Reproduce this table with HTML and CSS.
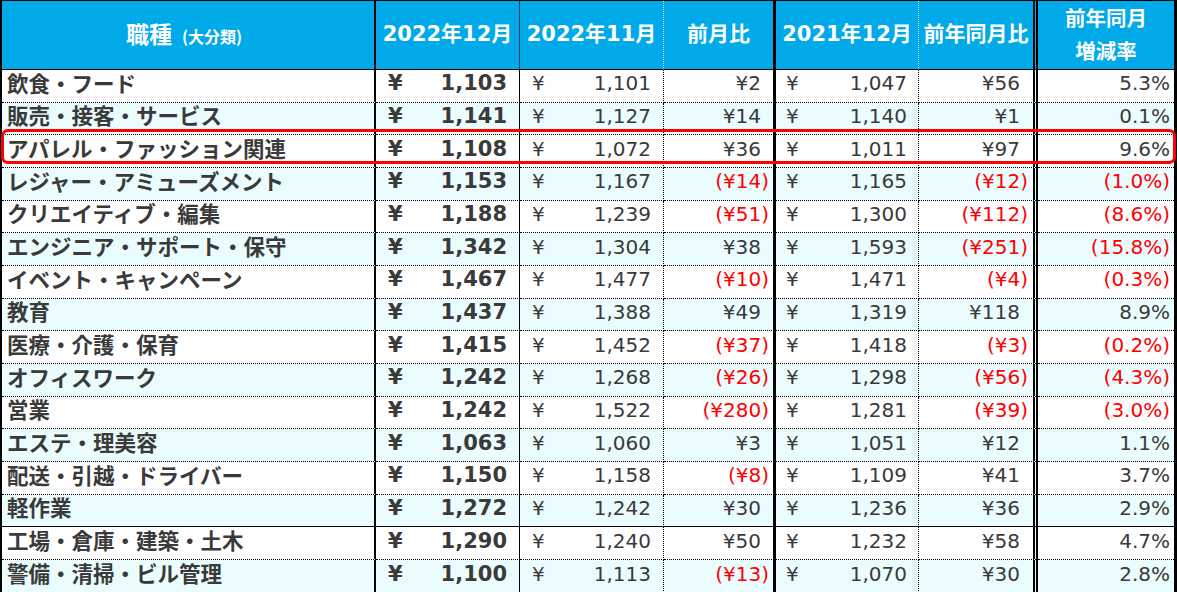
FILE: index.html
```html
<!DOCTYPE html>
<html lang="ja">
<head>
<meta charset="utf-8">
<title>職種別 平均時給</title>
<link rel="stylesheet" href="styles.css">
</head>
<body>
<div class="wrap">
<table class="sheet">
<colgroup>
<col class="w1"><col class="w2"><col class="w3"><col class="w4"><col class="w5"><col class="w6"><col class="w7">
</colgroup>
<thead>
<tr class="head">
<th class="c1"><span class="h-main">職種</span><span class="h-sub">(大分類)</span></th>
<th class="c2">2022年12月</th>
<th class="c3">2022年11月</th>
<th class="c4">前月比</th>
<th class="c5">2021年12月</th>
<th class="c6">前年同月比</th>
<th class="c7 two">前年同月<br>増減率</th>
</tr>
</thead>
<tbody>
<tr><td class="c1 name">飲食・フード</td><td class="c2 cur"><div class="acct"><span>¥</span><span>1,103</span></div></td><td class="c3 prev"><div class="acct"><span>¥</span><span>1,101</span></div></td><td class="c4 diff pos">¥2</td><td class="c5 last"><div class="acct"><span>¥</span><span>1,047</span></div></td><td class="c6 diff pos">¥56</td><td class="c7 rate">5.3%</td></tr>
<tr><td class="c1 name">販売・接客・サービス</td><td class="c2 cur"><div class="acct"><span>¥</span><span>1,141</span></div></td><td class="c3 prev"><div class="acct"><span>¥</span><span>1,127</span></div></td><td class="c4 diff pos">¥14</td><td class="c5 last"><div class="acct"><span>¥</span><span>1,140</span></div></td><td class="c6 diff pos">¥1</td><td class="c7 rate">0.1%</td></tr>
<tr><td class="c1 name">アパレル・ファッション関連</td><td class="c2 cur"><div class="acct"><span>¥</span><span>1,108</span></div></td><td class="c3 prev"><div class="acct"><span>¥</span><span>1,072</span></div></td><td class="c4 diff pos">¥36</td><td class="c5 last"><div class="acct"><span>¥</span><span>1,011</span></div></td><td class="c6 diff pos">¥97</td><td class="c7 rate">9.6%</td></tr>
<tr><td class="c1 name">レジャー・アミューズメント</td><td class="c2 cur"><div class="acct"><span>¥</span><span>1,153</span></div></td><td class="c3 prev"><div class="acct"><span>¥</span><span>1,167</span></div></td><td class="c4 diff neg">(¥14)</td><td class="c5 last"><div class="acct"><span>¥</span><span>1,165</span></div></td><td class="c6 diff neg">(¥12)</td><td class="c7 rate neg">(1.0%)</td></tr>
<tr><td class="c1 name">クリエイティブ・編集</td><td class="c2 cur"><div class="acct"><span>¥</span><span>1,188</span></div></td><td class="c3 prev"><div class="acct"><span>¥</span><span>1,239</span></div></td><td class="c4 diff neg">(¥51)</td><td class="c5 last"><div class="acct"><span>¥</span><span>1,300</span></div></td><td class="c6 diff neg">(¥112)</td><td class="c7 rate neg">(8.6%)</td></tr>
<tr><td class="c1 name">エンジニア・サポート・保守</td><td class="c2 cur"><div class="acct"><span>¥</span><span>1,342</span></div></td><td class="c3 prev"><div class="acct"><span>¥</span><span>1,304</span></div></td><td class="c4 diff pos">¥38</td><td class="c5 last"><div class="acct"><span>¥</span><span>1,593</span></div></td><td class="c6 diff neg">(¥251)</td><td class="c7 rate neg">(15.8%)</td></tr>
<tr><td class="c1 name">イベント・キャンペーン</td><td class="c2 cur"><div class="acct"><span>¥</span><span>1,467</span></div></td><td class="c3 prev"><div class="acct"><span>¥</span><span>1,477</span></div></td><td class="c4 diff neg">(¥10)</td><td class="c5 last"><div class="acct"><span>¥</span><span>1,471</span></div></td><td class="c6 diff neg">(¥4)</td><td class="c7 rate neg">(0.3%)</td></tr>
<tr><td class="c1 name">教育</td><td class="c2 cur"><div class="acct"><span>¥</span><span>1,437</span></div></td><td class="c3 prev"><div class="acct"><span>¥</span><span>1,388</span></div></td><td class="c4 diff pos">¥49</td><td class="c5 last"><div class="acct"><span>¥</span><span>1,319</span></div></td><td class="c6 diff pos">¥118</td><td class="c7 rate">8.9%</td></tr>
<tr><td class="c1 name">医療・介護・保育</td><td class="c2 cur"><div class="acct"><span>¥</span><span>1,415</span></div></td><td class="c3 prev"><div class="acct"><span>¥</span><span>1,452</span></div></td><td class="c4 diff neg">(¥37)</td><td class="c5 last"><div class="acct"><span>¥</span><span>1,418</span></div></td><td class="c6 diff neg">(¥3)</td><td class="c7 rate neg">(0.2%)</td></tr>
<tr><td class="c1 name">オフィスワーク</td><td class="c2 cur"><div class="acct"><span>¥</span><span>1,242</span></div></td><td class="c3 prev"><div class="acct"><span>¥</span><span>1,268</span></div></td><td class="c4 diff neg">(¥26)</td><td class="c5 last"><div class="acct"><span>¥</span><span>1,298</span></div></td><td class="c6 diff neg">(¥56)</td><td class="c7 rate neg">(4.3%)</td></tr>
<tr><td class="c1 name">営業</td><td class="c2 cur"><div class="acct"><span>¥</span><span>1,242</span></div></td><td class="c3 prev"><div class="acct"><span>¥</span><span>1,522</span></div></td><td class="c4 diff neg">(¥280)</td><td class="c5 last"><div class="acct"><span>¥</span><span>1,281</span></div></td><td class="c6 diff neg">(¥39)</td><td class="c7 rate neg">(3.0%)</td></tr>
<tr><td class="c1 name">エステ・理美容</td><td class="c2 cur"><div class="acct"><span>¥</span><span>1,063</span></div></td><td class="c3 prev"><div class="acct"><span>¥</span><span>1,060</span></div></td><td class="c4 diff pos">¥3</td><td class="c5 last"><div class="acct"><span>¥</span><span>1,051</span></div></td><td class="c6 diff pos">¥12</td><td class="c7 rate">1.1%</td></tr>
<tr><td class="c1 name">配送・引越・ドライバー</td><td class="c2 cur"><div class="acct"><span>¥</span><span>1,150</span></div></td><td class="c3 prev"><div class="acct"><span>¥</span><span>1,158</span></div></td><td class="c4 diff neg">(¥8)</td><td class="c5 last"><div class="acct"><span>¥</span><span>1,109</span></div></td><td class="c6 diff pos">¥41</td><td class="c7 rate">3.7%</td></tr>
<tr class="solid"><td class="c1 name">軽作業</td><td class="c2 cur"><div class="acct"><span>¥</span><span>1,272</span></div></td><td class="c3 prev"><div class="acct"><span>¥</span><span>1,242</span></div></td><td class="c4 diff pos">¥30</td><td class="c5 last"><div class="acct"><span>¥</span><span>1,236</span></div></td><td class="c6 diff pos">¥36</td><td class="c7 rate">2.9%</td></tr>
<tr><td class="c1 name">工場・倉庫・建築・土木</td><td class="c2 cur"><div class="acct"><span>¥</span><span>1,290</span></div></td><td class="c3 prev"><div class="acct"><span>¥</span><span>1,240</span></div></td><td class="c4 diff pos">¥50</td><td class="c5 last"><div class="acct"><span>¥</span><span>1,232</span></div></td><td class="c6 diff pos">¥58</td><td class="c7 rate">4.7%</td></tr>
<tr class="final"><td class="c1 name">警備・清掃・ビル管理</td><td class="c2 cur"><div class="acct"><span>¥</span><span>1,100</span></div></td><td class="c3 prev"><div class="acct"><span>¥</span><span>1,113</span></div></td><td class="c4 diff neg">(¥13)</td><td class="c5 last"><div class="acct"><span>¥</span><span>1,070</span></div></td><td class="c6 diff pos">¥30</td><td class="c7 rate">2.8%</td></tr>
</tbody>
</table>
<div class="highlight"></div>
</div>
</body>
</html>
```

FILE: styles.css
```css
html, body {
  margin: 0;
  padding: 0;
  background: #ffffff;
}

.wrap {
  position: relative;
  width: 1177px;
}

.sheet {
  border-collapse: separate;
  border-spacing: 0;
  table-layout: fixed;
  width: 1177px;
  border-left: 2px solid #000;
  border-top: 1px solid #000;
  border-right: 3px solid #000;
  border-bottom: 2px solid #000;
  font-family: "DejaVu Sans", "Noto Sans CJK JP", sans-serif;
  color: #3a3a3a;
}

.w1 { width: 374px; }
.w2 { width: 144px; }
.w3 { width: 144px; }
.w4 { width: 112px; }
.w5 { width: 143px; }
.w6 { width: 119px; }
.w7 { width: 136px; }

.sheet th,
.sheet td {
  padding: 0;
  box-sizing: border-box;
  vertical-align: middle;
  white-space: nowrap;
}

.c1 { border-right: 2px solid #000; }
.c2 { border-right: 1px solid #000; }
.c3 { border-right: 1px dotted #000; }
.c4 { border-right: 3px solid #000; }
.c5 { border-right: 1px dotted #000; }
.c6 { border-right: 5px double #000; }

/* header */
.head { height: 65px; }

.head th {
  background: #00a9e8;
  color: #ffffff;
  font-weight: 700;
  font-size: 21px;
  line-height: 26px;
  text-align: center;
  border-bottom: 1px solid #000;
  padding-bottom: 2px;
}

.head .c3,
.head .c5 {
  border-right: 1px dotted rgba(255, 255, 255, 0.75);
}

.head .c2 { border-right-color: #1d3a48; }

.head .c1 { padding-right: 8px; }

.h-main {
  font-family: "Noto Sans CJK JP", sans-serif;
  font-size: 23px;
}

.h-sub {
  font-family: "Noto Sans CJK JP", sans-serif;
  font-size: 16px;
  margin-left: 10px;
}

.head .two {
  font-family: "Noto Sans CJK JP", sans-serif;
  font-size: 20.5px;
  line-height: 33px;
}

/* body */
tbody tr { height: 32.67px; }

tbody tr:nth-child(even) td { background: #ebfcff; }

tbody td {
  border-bottom: 1px dotted #000;
  line-height: 23px;
  padding-bottom: 4px !important;
}
tbody tr.solid td { border-bottom: 1px solid #000; }
tbody tr.final td { border-bottom: none; }

.name {
  font-family: "Noto Sans CJK JP", sans-serif;
  font-weight: 700;
  font-size: 21.5px;
  text-align: left;
  padding-left: 5px !important;
  padding-bottom: 7px !important;
  color: #3a3a3a;
}

.acct {
  display: flex;
  justify-content: space-between;
  align-items: center;
}

.cur {
  font-weight: 700;
  font-size: 21px;
  padding-left: 12px !important;
  padding-right: 12px !important;
}

.prev {
  font-size: 20px;
  padding-left: 12px !important;
  padding-right: 12px !important;
}

.last {
  font-size: 20px;
  padding-left: 10px !important;
  padding-right: 11px !important;
}

.diff {
  font-size: 20px;
  text-align: right;
}

.c4.diff.neg { padding-right: 4px !important; }
.c4.diff.pos { padding-right: 12px !important; }
.c6.diff.neg { padding-right: 5px !important; }
.c6.diff.pos { padding-right: 13px !important; }

.rate {
  font-size: 20px;
  text-align: right;
  padding-right: 4px !important;
}

.neg { color: #ff0000; }

/* highlight box over the third row */
.highlight {
  position: absolute;
  left: 1px;
  top: 129px;
  width: 1175px;
  height: 35px;
  box-sizing: border-box;
  border: 3px solid #ff0000;
  border-radius: 7px;
  pointer-events: none;
}
```
